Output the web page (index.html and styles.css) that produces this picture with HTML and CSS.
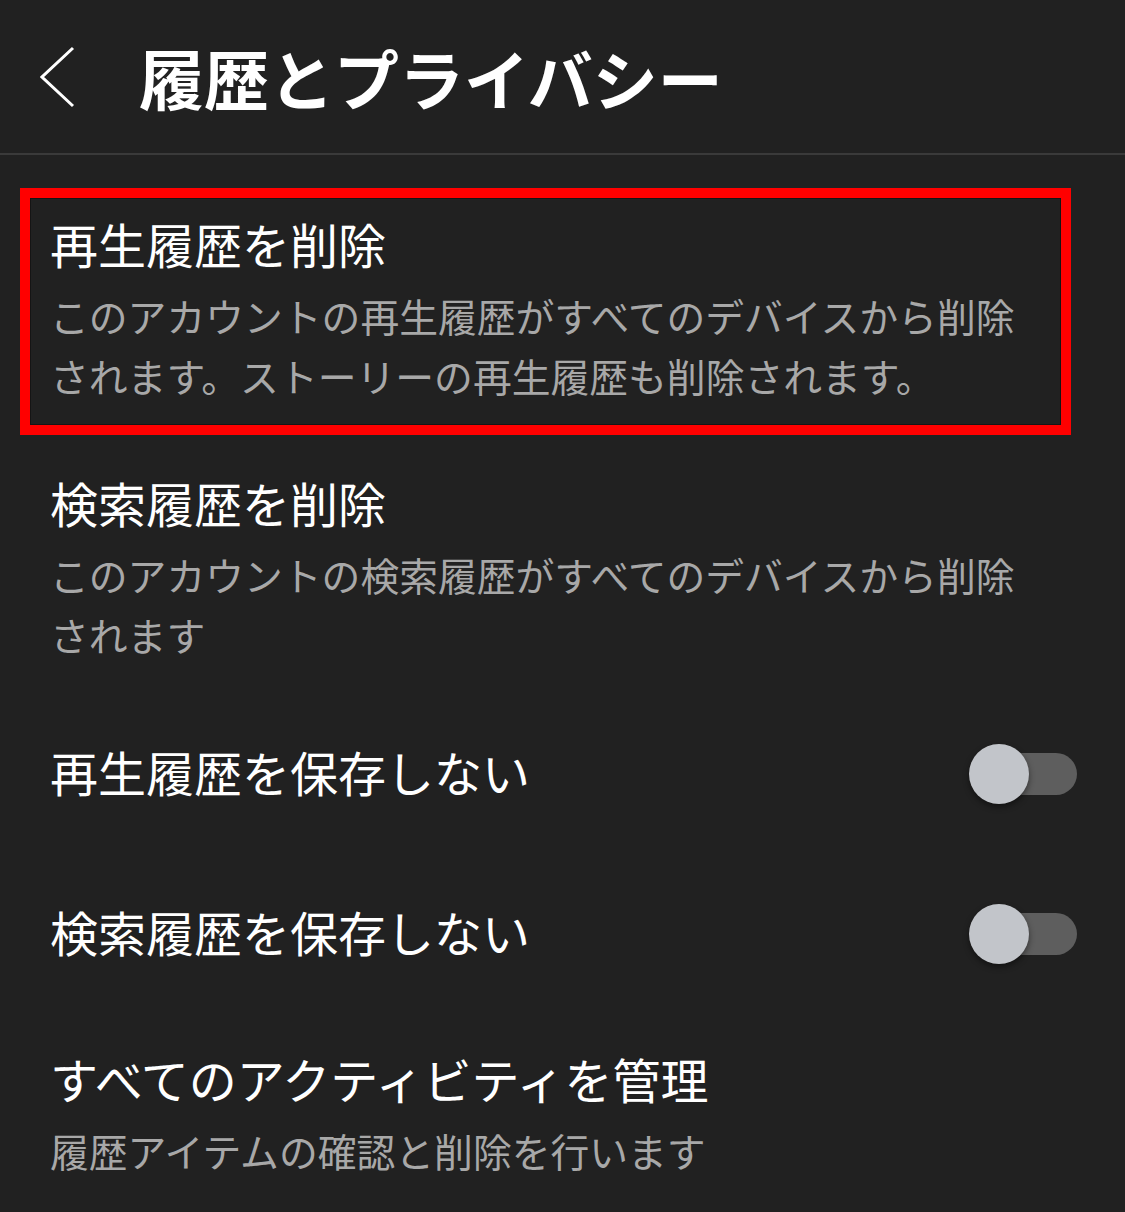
FILE: index.html
```html
<!DOCTYPE html>
<html lang="ja">
<head>
<meta charset="utf-8">
<link rel="stylesheet" href="styles.css">
</head>
<body>
<header class="topbar">
  <svg class="back" width="40" height="64" viewBox="0 0 40 64" aria-hidden="true">
    <polyline points="33,2 2,31 33,60" fill="none" stroke="#fff" stroke-width="3" stroke-linejoin="miter"/>
  </svg>
  <h1 class="page-title">履歴とプライバシー</h1>
</header>
<main class="list">
  <section class="item item-outlined">
    <div class="item-title">再生履歴を削除</div>
    <div class="item-sub">このアカウントの再生履歴がすべてのデバイスから削除されます。ストーリーの再生履歴も削除されます。</div>
  </section>
  <section class="item item-plain">
    <div class="item-title">検索履歴を削除</div>
    <div class="item-sub">このアカウントの検索履歴がすべてのデバイスから削除されます</div>
  </section>
  <section class="item item-toggle">
    <div class="item-title">再生履歴を保存しない</div>
    <div class="switch"><span class="track"></span><span class="knob"></span></div>
  </section>
  <section class="item item-toggle">
    <div class="item-title">検索履歴を保存しない</div>
    <div class="switch"><span class="track"></span><span class="knob"></span></div>
  </section>
  <section class="item item-last">
    <div class="item-title">すべてのアクティビティを管理</div>
    <div class="item-sub">履歴アイテムの確認と削除を行います</div>
  </section>
</main>
</body>
</html>
```
FILE: styles.css
```css
html, body {
  margin: 0;
  padding: 0;
  background: #212121;
}
body {
  width: 1125px;
  height: 1212px;
  overflow: hidden;
  font-family: "Noto Sans CJK JP", "Noto Sans", sans-serif;
  color: #ffffff;
}
.topbar {
  height: 153px;
  border-bottom: 2px solid #3a3a3a;
  display: flex;
  align-items: center;
  box-sizing: content-box;
}
.back {
  margin-left: 40px;
  margin-top: 2px;
  flex: none;
}
.page-title {
  margin: 0 0 0 59px;
  font-size: 65px;
  font-weight: 700;
  line-height: 80px;
  letter-spacing: 0;
  color: #ffffff;
}
.list {
  padding-top: 33px;
}
.item-title {
  font-size: 48px;
  line-height: 60px;
  font-weight: 400;
  color: #ffffff;
  white-space: nowrap;
}
.item-sub {
  font-size: 38.8px;
  line-height: 60px;
  color: #a8a8a8;
  margin-top: 12px;
}
.item-outlined {
  margin: 0 54px 0 20px;
  border: 10px solid #ff0000;
  padding: 15px 20px 20px 20px;
  box-shadow: inset 0 0 0 1px #151515;
}
.item-plain {
  padding: 37px 74px 30px 50px;
}
.item-toggle {
  height: 160px;
  padding: 0 48px 0 50px;
  display: flex;
  align-items: center;
  justify-content: space-between;
  box-sizing: border-box;
}
.item-toggle .item-title {
  margin-top: -6px;
}
.item-last {
  padding: 34px 50px 0 50px;
}
.switch {
  position: relative;
  width: 108px;
  height: 60px;
  flex: none;
}
.track {
  position: absolute;
  right: 0;
  top: 9px;
  width: 104px;
  height: 42px;
  border-radius: 21px;
  background: #5e5e5e;
}
.knob {
  position: absolute;
  left: 0;
  top: 0;
  width: 60px;
  height: 60px;
  border-radius: 50%;
  background: #c2c5ca;
  box-shadow: 0 3px 6px rgba(0, 0, 0, 0.45);
}
```
